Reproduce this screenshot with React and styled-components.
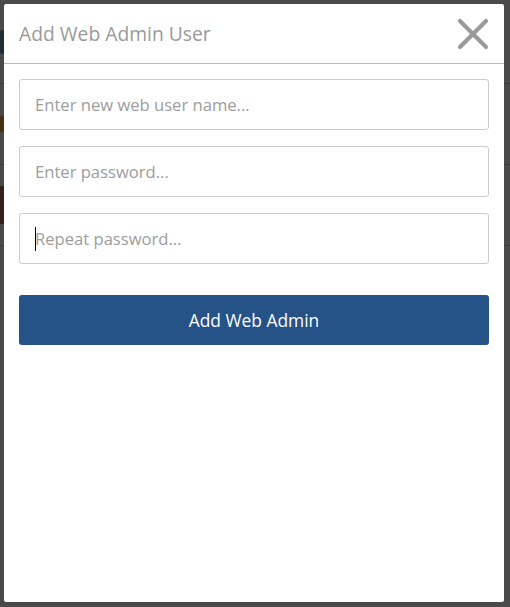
import React from 'react';
import styled, { createGlobalStyle } from 'styled-components';

const Global = createGlobalStyle`
    html, body {
        margin: 0;
        padding: 0;
        background: #ffffff;
        font-family: "Open Sans", "Noto Sans", sans-serif;
    }
`

const Page = styled.div`
    height: 607px;
    overflow: hidden;
`

const Row = styled.div`
    display: flex;
    align-items: center;
    height: ${props => props.$h || 80}px;
    border-bottom: 1px solid #c6c6c6;
`

const Dot = styled.span`
    display: block;
    width: ${props => props.$w || 10}px;
    height: ${props => props.$h || 10}px;
    margin-left: -4px;
    border-radius: ${props => props.$round ? '50%' : '0'};
    background: ${props => props.$color};
`

const Overlay = styled.div`
    position: fixed;
    inset: 0;
    background: rgba(0, 0, 0, 0.71);
    display: flex;
    padding: 4px 6px 5px 4px;
    box-sizing: border-box;
`

const Modal = styled.div`
    flex: 1;
    background: #ffffff;
    border-radius: 2px;
    display: flex;
    flex-direction: column;
`

const Header = styled.div`
    display: flex;
    align-items: center;
    justify-content: space-between;
    height: 59px;
    padding: 0 15px;
    border-bottom: 1px solid #b9b9b9;
`

const Title = styled.h4`
    margin: 0;
    font-size: 19.3px;
    font-weight: 400;
    color: #9a9a9a;
`

const Close = styled.button`
    border: 0;
    background: none;
    padding: 0;
    width: 32px;
    height: 32px;
    display: flex;
    align-items: center;
    justify-content: center;
    cursor: pointer;
`

const Form = styled.form`
    display: flex;
    flex-direction: column;
    gap: 16px;
    padding: 15px;
`

const Field = styled.div`
    position: relative;
    display: flex;
`

const Input = styled.input`
    flex: 1;
    height: 51px;
    box-sizing: border-box;
    border: 1px solid #cccccc;
    border-radius: 3px;
    padding: 0 15px;
    font-family: inherit;
    font-size: 16.6px;
    color: #333333;
    outline: none;

    &::placeholder {
        color: #9d9d9d;
    }
`

const Caret = styled.span`
    position: absolute;
    left: 16px;
    top: 14px;
    width: 1px;
    height: 24px;
    background: #000000;
    pointer-events: none;
`

const Submit = styled.button`
    margin-top: 15px;
    height: 50px;
    border: 0;
    border-radius: 3px;
    background: #255287;
    color: #ffffff;
    font-family: inherit;
    font-size: 17.4px;
    cursor: pointer;
`

const App = () => {
    return (
        <>
            <Global />
            <Page>
                <Row $h={83}><Dot $color="#7a93b8" $w={14} $h={24} $round /></Row>
                <Row><Dot $color="#f0a040" $w={12} $h={16} $round /></Row>
                <Row><Dot $color="#b27268" $w={12} $h={38} /></Row>
            </Page>
            <Overlay>
                <Modal>
                    <Header>
                        <Title>Add Web Admin User</Title>
                        <Close aria-label="Close">
                            <svg width="32" height="32" viewBox="0 0 32 32">
                                <path d="M3 3 L29 29 M29 3 L3 29" stroke="#9a9a9a" strokeWidth="4.2" strokeLinecap="round" fill="none" />
                            </svg>
                        </Close>
                    </Header>
                    <Form onSubmit={e => e.preventDefault()}>
                        <Field>
                            <Input type="text" placeholder="Enter new web user name..." />
                        </Field>
                        <Field>
                            <Input type="password" placeholder="Enter password..." />
                        </Field>
                        <Field>
                            <Input type="password" placeholder="Repeat password..." />
                            <Caret />
                        </Field>
                        <Submit type="submit">Add Web Admin</Submit>
                    </Form>
                </Modal>
            </Overlay>
        </>
    );
}

export default App;
